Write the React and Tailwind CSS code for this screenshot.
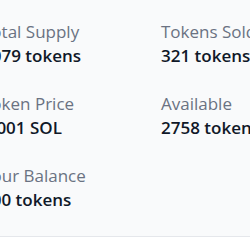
import React from "react";

const stats = [
  { label: "Total Supply", value: "3079 tokens" },
  { label: "Tokens Sold", value: "321 tokens" },
  { label: "Token Price", value: "0.001 SOL" },
  { label: "Available", value: "2758 tokens" },
  { label: "Your Balance", value: "100 tokens" },
];

export default function App() {
  return (
    <div
      className="w-[250px] h-[250px] overflow-hidden bg-white"
      style={{ fontFamily: '"Open Sans", sans-serif' }}
    >
      <div className="bg-gray-50 border-b border-gray-200 pt-5 pb-6">
        <div className="-ml-[18px] w-[360px] grid grid-cols-[179px_179px] gap-y-6">
          {stats.map((s) => (
            <div key={s.label}>
              <p className="text-[17px] leading-6 text-gray-500">{s.label}</p>
              <p className="text-[17px] leading-6 font-semibold text-gray-900">{s.value}</p>
            </div>
          ))}
        </div>
      </div>
    </div>
  );
}
